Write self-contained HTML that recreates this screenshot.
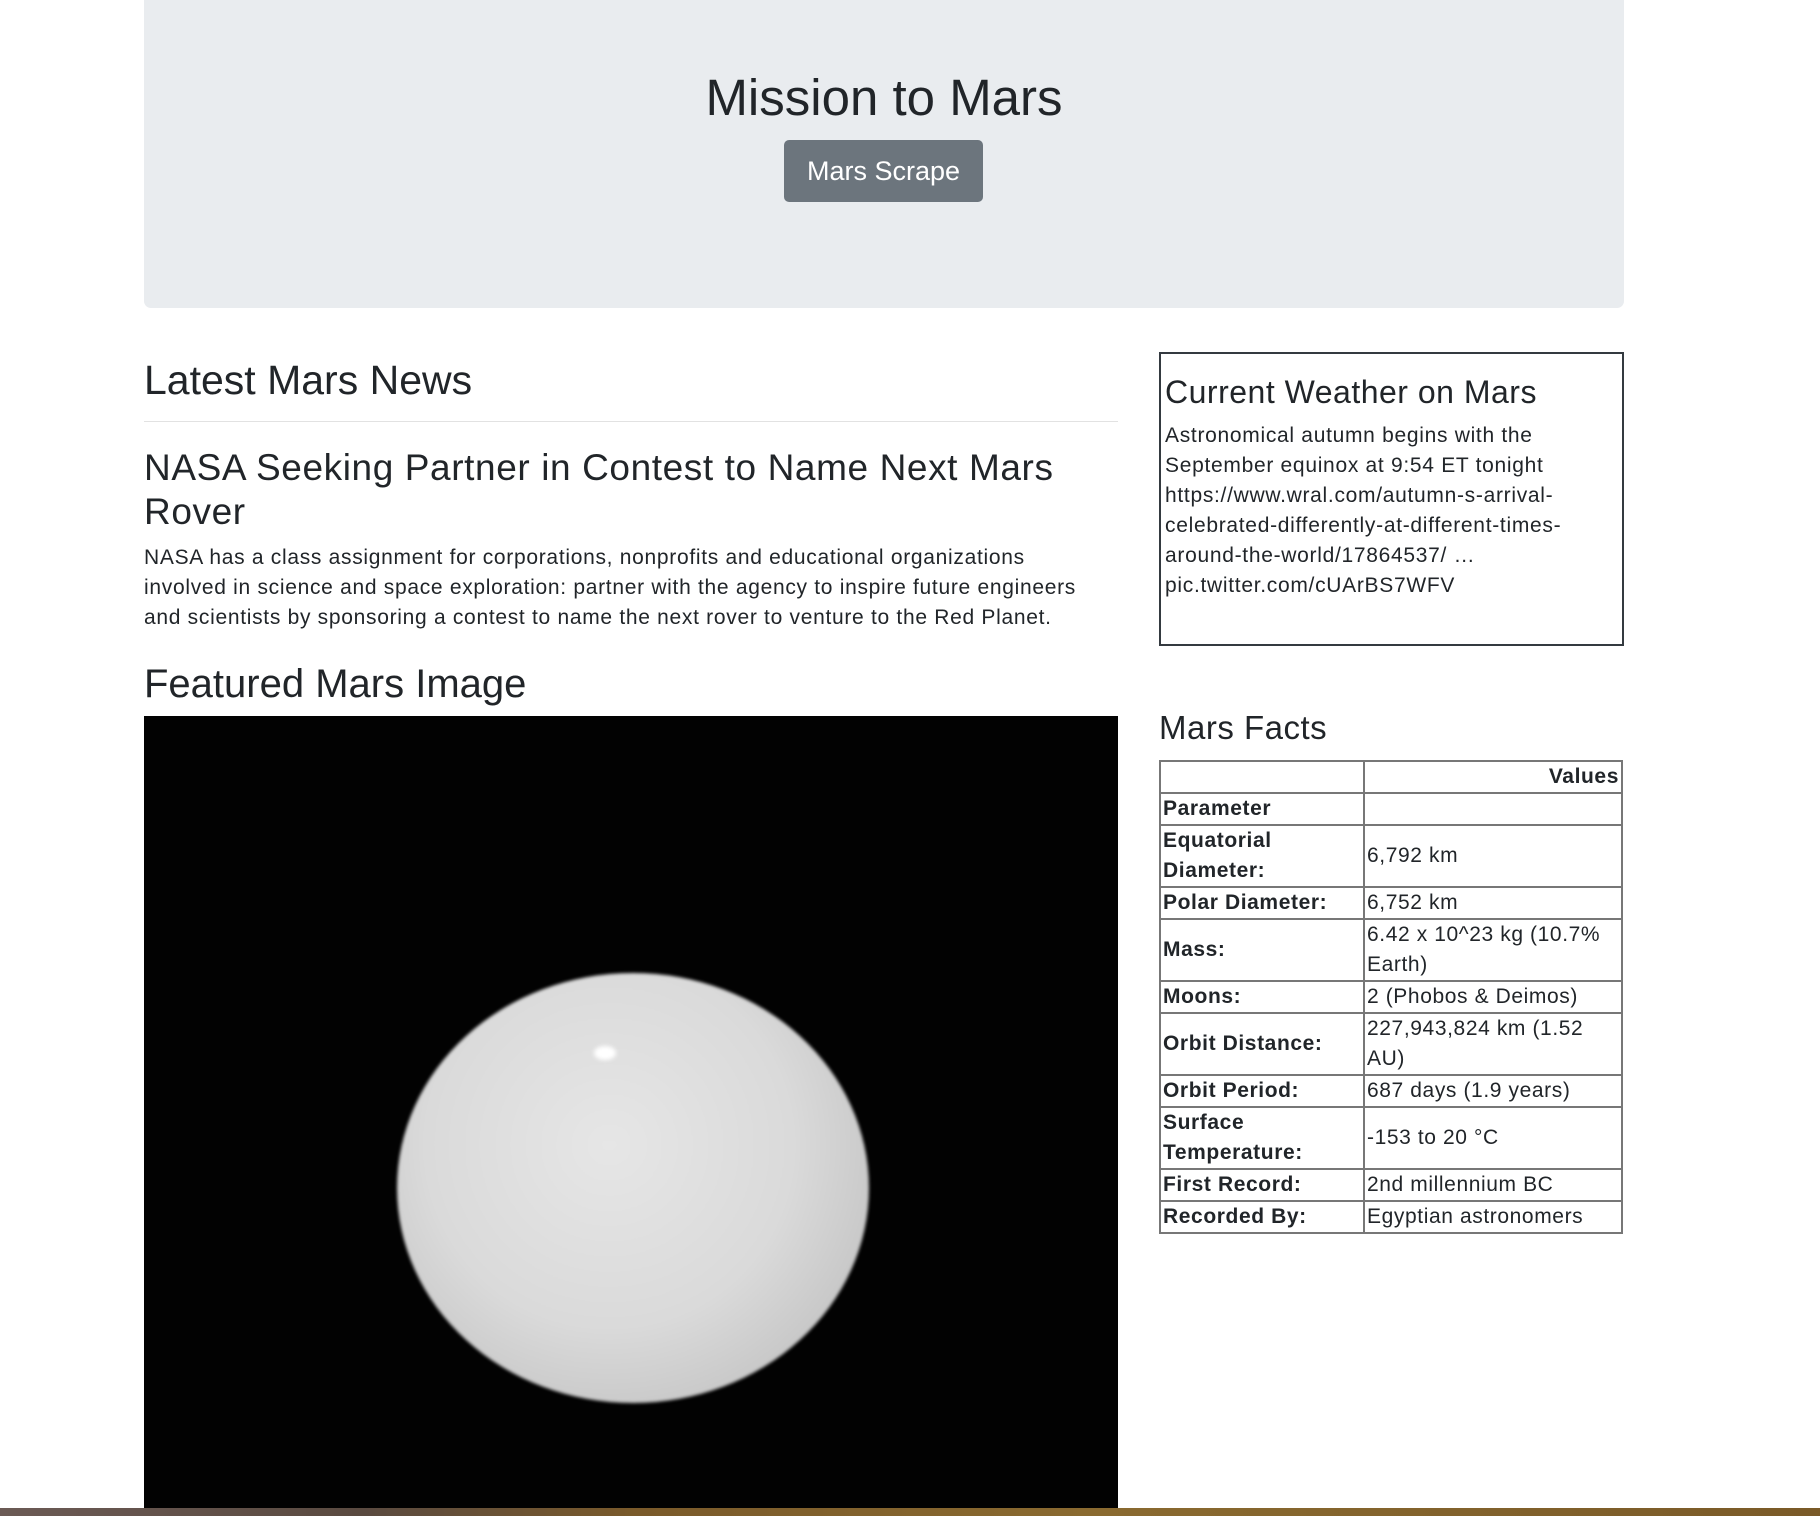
<!DOCTYPE html>
<html><head><meta charset="utf-8"><style>
*{box-sizing:border-box;margin:0;padding:0}
body{width:1820px;height:1516px;overflow:hidden;background:#fff;font-family:"Liberation Sans",sans-serif;color:#212529;position:relative}
.abs{position:absolute}
.jumbo{left:144px;top:0;width:1480px;height:308px;background:#e9ecef;border-radius:0 0 7px 7px}
h1{position:absolute;left:0;width:1768px;text-align:center;top:68px;font-size:51px;font-weight:400;line-height:60px}
.btn{left:784px;top:140px;width:199px;height:62px;background:#6c757d;border-radius:5px;color:#fff;font-size:27px;text-align:center;line-height:62px}
.h{font-weight:400;white-space:nowrap}
.t{letter-spacing:0.7px}
table{border-collapse:collapse;position:absolute;left:1159px;top:760px;width:464px;border:2px solid #222;font-size:21px;letter-spacing:0.6px}
td,th{border:2px solid #777;padding:0 2px;line-height:30px;vertical-align:middle}
td:first-child{font-weight:bold;width:204px}
</style></head><body>
<div class="abs jumbo"></div>
<h1>Mission to Mars</h1>
<div class="abs btn">Mars Scrape</div>

<div class="abs h" style="left:144px;top:355px;font-size:41px;line-height:50px">Latest Mars News</div>
<div class="abs" style="left:144px;top:421px;width:974px;height:1px;background:#e2e2e2"></div>
<div class="abs" style="left:144px;top:446px;width:974px;font-size:37px;line-height:44px;letter-spacing:0.6px">NASA Seeking Partner in Contest to Name Next Mars Rover</div>
<div class="abs t" style="left:144px;top:543px;width:950px;font-size:21px;line-height:30px">NASA has a class assignment for corporations, nonprofits and educational organizations involved in science and space exploration: partner with the agency to inspire future engineers and scientists by sponsoring a contest to name the next rover to venture to the Red Planet.</div>
<div class="abs h" style="left:144px;top:659px;font-size:40px;line-height:50px">Featured Mars Image</div>
<div class="abs" style="left:144px;top:716px;width:974px;height:792px;background:#020202;overflow:hidden">
<div class="abs" style="left:253px;top:257px;width:472px;height:430px;border-radius:50%;background:radial-gradient(ellipse at 45% 40%,#e6e6e6 0%,#dadada 50%,#c4c4c4 80%,#8a8a8a 100%);filter:blur(1.5px)"></div>
<div class="abs" style="left:450px;top:330px;width:22px;height:14px;border-radius:50%;background:#fff;filter:blur(2px)"></div>
</div>

<div class="abs" style="left:1159px;top:352px;width:465px;height:294px;border:2px solid #343a40"></div>
<div class="abs h" style="left:1165px;top:372px;font-size:32px;line-height:40px;letter-spacing:0.5px">Current Weather on Mars</div>
<div class="abs t" style="left:1165px;top:421px;width:440px;font-size:21px;line-height:30px">Astronomical autumn begins with the September equinox at 9:54 ET tonight https://www.wral.com/autumn-s-arrival-celebrated-differently-at-different-times-around-the-world/17864537/ … pic.twitter.com/cUArBS7WFV</div>

<div class="abs h" style="left:1159px;top:708px;font-size:33px;line-height:40px;letter-spacing:0.5px">Mars Facts</div>
<table>
<tr><td></td><th style="text-align:right">Values</th></tr>
<tr><td>Parameter</td><td></td></tr>
<tr><td>Equatorial Diameter:</td><td>6,792 km</td></tr>
<tr><td>Polar Diameter:</td><td>6,752 km</td></tr>
<tr><td>Mass:</td><td>6.42 x 10^23 kg (10.7% Earth)</td></tr>
<tr><td>Moons:</td><td>2 (Phobos &amp; Deimos)</td></tr>
<tr><td>Orbit Distance:</td><td>227,943,824 km (1.52<br>AU)</td></tr>
<tr><td>Orbit Period:</td><td>687 days (1.9 years)</td></tr>
<tr><td>Surface Temperature:</td><td>-153 to 20 °C</td></tr>
<tr><td>First Record:</td><td>2nd millennium BC</td></tr>
<tr><td>Recorded By:</td><td>Egyptian astronomers</td></tr>
</table>
<div class="abs" style="left:0;top:1508px;width:1820px;height:8px;background:linear-gradient(90deg,#6b5a55 0%,#5a4a40 20%,#7a5a2a 35%,#8a6a30 60%,#7a5a28 100%)"></div>
</body></html>
